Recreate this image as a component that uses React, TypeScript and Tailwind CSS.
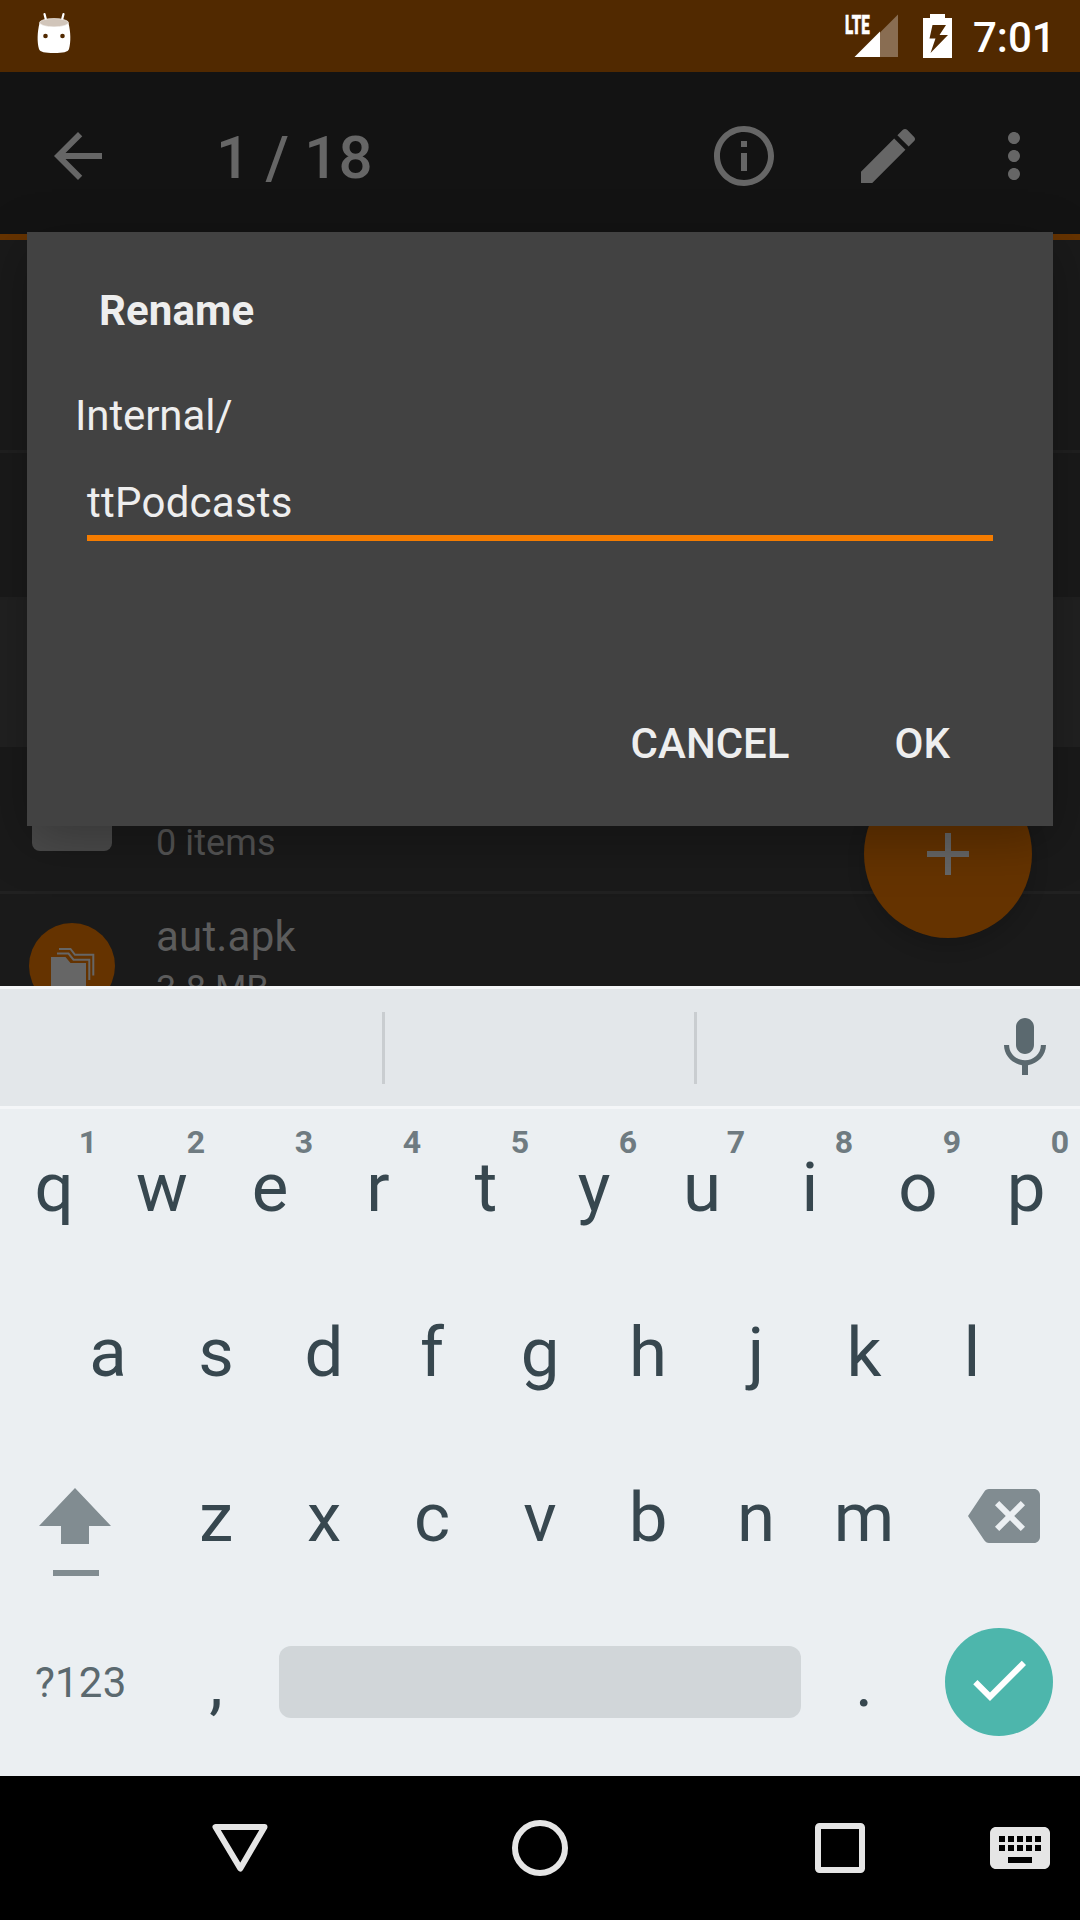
import React from "react";

const font = "font-[Roboto,'Liberation_Sans',sans-serif]";

function Icon({ d, className = "" }: { d: string; className?: string }) {
  return (
    <svg viewBox="0 0 24 24" className={`h-[72px] w-[72px] shrink-0 fill-current ${className}`}>
      <path d={d} />
    </svg>
  );
}

const ICONS = {
  back: "M20 11H7.83l5.59-5.59L12 4l-8 8 8 8 1.41-1.41L7.83 13H20v-2z",
  info: "M11 17h2v-6h-2v6zm1-15C6.48 2 2 6.48 2 12s4.48 10 10 10 10-4.48 10-10S17.52 2 12 2zm0 18c-4.41 0-8-3.59-8-8s3.59-8 8-8 8 3.59 8 8-3.59 8-8 8zM11 9h2V7h-2v2z",
  edit: "M3 17.25V21h3.75L17.81 9.94l-3.75-3.75L3 17.25zM20.71 7.04c.39-.39.39-1.02 0-1.41l-2.34-2.34c-.39-.39-1.02-.39-1.41 0l-1.83 1.83 3.75 3.75 1.83-1.83z",
  more: "M12 8c1.1 0 2-.9 2-2s-.9-2-2-2-2 .9-2 2 .9 2 2 2zm0 2c-1.1 0-2 .9-2 2s.9 2 2 2 2-.9 2-2-.9-2-2-2zm0 6c-1.1 0-2 .9-2 2s.9 2 2 2 2-.9 2-2-.9-2-2-2z",
  add: "M19 13h-6v6h-2v-6H5v-2h6V5h2v6h6v2z",
  mic: "M12 14c1.66 0 2.99-1.34 2.99-3L15 5c0-1.66-1.34-3-3-3S9 3.34 9 5v6c0 1.66 1.34 3 3 3zm5.3-3c0 3-2.54 5.1-5.3 5.1S6.7 14 6.7 11H5c0 3.41 2.72 6.23 6 6.72V21h2v-3.28c3.28-.48 6-3.3 6-6.72h-1.7z",
  backspace:
    "M22 3H7c-.69 0-1.23.35-1.59.88L0 12l5.41 8.11c.36.53.9.89 1.59.89h15c1.1 0 2-.9 2-2V5c0-1.1-.9-2-2-2zm-3 12.59L17.59 17 14 13.41 10.41 17 9 15.59 12.59 12 9 8.41 10.41 7 14 10.59 17.59 7 19 8.41 15.41 12 19 15.59z",
  check: "M9 16.17L4.83 12l-1.42 1.41L9 19 21 7l-1.41-1.41z",
  keyboard:
    "M20 5H4c-1.1 0-1.99.9-1.99 2L2 17c0 1.1.9 2 2 2h16c1.1 0 2-.9 2-2V7c0-1.1-.9-2-2-2zm-9 3h2v2h-2V8zm0 3h2v2h-2v-2zM8 8h2v2H8V8zm0 3h2v2H8v-2zm-1 2H5v-2h2v2zm0-3H5V8h2v2zm9 7H8v-2h8v2zm0-4h-2v-2h2v2zm0-3h-2V8h2v2zm3 3h-2v-2h2v2zm0-3h-2V8h2v2z",
};

function StatusBar() {
  return (
    <header className="flex h-[72px] shrink-0 items-start bg-[#512900] pl-[37px] pr-[31px] text-white">
      <svg viewBox="0 0 34 42" className="mt-3 h-[42px] w-[34px]">
        <path d="M7.500 2l2 8M26.500 2l-2 8" stroke="#fff" strokeWidth="2.200" strokeLinecap="round" />
        <path d="M2.500 11C.3 20 0 30 2 37c.8 3 6 4 15 4s14.200-1 15-4c2-7 1.700-17-.5-26z" fill="#fff" />
        <ellipse cx="17" cy="10.700" rx="14.500" ry="4.200" fill="#d1c5ba" stroke="#fff" strokeWidth=".6" />
        <circle cx="8.500" cy="24" r="2.300" fill="#512900" />
        <circle cx="25.500" cy="24" r="2.300" fill="#512900" />
      </svg>
      <div className="relative ml-auto mt-[14px] h-[44px] w-[54px]">
        <span className="absolute left-[1px] top-[1px] origin-left scale-x-[0.58] text-[26px] font-black leading-[20px] [-webkit-text-stroke:0.5px_white]">
          LTE
        </span>
        <svg viewBox="0 0 54 44" className="h-full w-full">
          <path d="M36 18.500L54 .5V43H36z" fill="#fff" fillOpacity=".32" />
          <path d="M10.500 43L36 17.500V43z" fill="#fff" />
        </svg>
      </div>
      <svg viewBox="0 0 29 44" className="ml-[25px] mt-[14px] h-[44px] w-[29px]">
        <path d="M7 0h15v4h7v40H0V4h7z" fill="#fff" />
        <path d="M9.500 11H23l-6.500 10H25L7.500 39l5-14.500H6.500z" fill="#512900" />
      </svg>
      <span className="ml-[21px] w-[76px] whitespace-nowrap text-[42px] font-medium leading-[75px]">7:01</span>
    </header>
  );
}

function Toolbar() {
  return (
    <div className="flex h-[168px] shrink-0 border-b-[6px] border-[#663300] bg-[#131313] pl-[42px] pr-[30px] pt-[48px] text-[#666]">
      <Icon d={ICONS.back} />
      <span className="ml-[102px] text-[60px] font-medium leading-[75px] tracking-[0.2px]">1 / 18</span>
      <Icon d={ICONS.info} className="ml-auto" />
      <Icon d={ICONS.edit} className="ml-[72px]" />
      <Icon d={ICONS.more} className="ml-[54px]" />
    </div>
  );
}

function FileList() {
  return (
    <div className="h-[746px] shrink-0 overflow-hidden bg-[#1a1a1a]">
      <div className="h-[213px] border-b-[3px] border-[#202020]" />
      <div className="h-[147px] border-b-[3px] border-[#202020]" />
      <div className="h-[147px] bg-[#212121]" />
      <div className="flex h-[147px] border-b-[3px] border-[#212121] pl-[32px]">
        <div className="mt-[36px] h-[68px] w-[80px] rounded-[8px] bg-[#4b4b4b]" />
        <span className="ml-[44px] mt-[73px] text-[36px] leading-[47px] tracking-[0.1px] text-[#555]">0 items</span>
      </div>
      <div className="flex h-[147px] pl-[29px]">
        <div className="mt-[29px] h-[86px] w-[86px] rounded-full bg-[#653300]">
          <svg viewBox="0 0 86 86" className="h-[86px] w-[86px]">
            <path d="M22 34h14.500l5 6H57v28H22z" fill="#666" />
            <path
              d="M28 30.500h11.500l5 6.200h15.800V57M30 26h11.500l4.500 5.800h18.300v20.700"
              fill="none"
              stroke="#666"
              strokeWidth="2"
            />
          </svg>
        </div>
        <div className="ml-[41px] flex flex-col pt-[18px] text-[#5c5c5c]">
          <span className="text-[42px] leading-[50px] tracking-[0.2px]">aut.apk</span>
          <span className="mt-[4px] text-[36px] leading-[47px]">3.8 MB</span>
        </div>
      </div>
    </div>
  );
}

function RenameDialog() {
  return (
    <div className="absolute left-[27px] top-[232px] flex h-[594px] w-[1026px] flex-col bg-[#424242] text-[42px] leading-[50px] text-[#eee] shadow-[0_14px_50px_rgba(0,0,0,0.28)]">
      <h1 className="ml-[72px] mt-[54px] font-bold tracking-[0.1px]">Rename</h1>
      <p className="ml-[48px] mt-[55px] tracking-[-0.1px]">Internal/</p>
      <div className="ml-[60px] mt-[37px] w-[906px] border-b-[6px] border-[#f57c00] pb-[7px] tracking-[0.25px]">
        ttPodcasts
      </div>
      <div className="mt-[178px] flex justify-end gap-[105px] pr-[103px] font-medium">
        <span>CANCEL</span>
        <span>OK</span>
      </div>
    </div>
  );
}

function Key({ label, hint }: { label: string; hint?: string }) {
  return (
    <div className="relative h-[165px] w-[108px] text-center text-[69px] leading-[157px] text-[#37474f]">
      {label}
      {hint && (
        <span className="absolute right-[11px] top-[14px] text-[32px] font-bold leading-[38px] text-[#6f7b81]">{hint}</span>
      )}
    </div>
  );
}

function Keyboard() {
  return (
    <section className="flex h-[790px] shrink-0 flex-col bg-[#ebeff2]">
      <div className="flex h-[123px] items-center border-b-[3px] border-t-[3px] border-[#f4f6f8] bg-[#e3e7ea]">
        <div className="h-[72px] w-[385px] border-r-[3px] border-[#c9cdd0]" />
        <div className="h-[72px] w-[312px] border-r-[3px] border-[#c9cdd0]" />
        <Icon d={ICONS.mic} className="ml-auto mr-[19px] mt-px text-[#5b696f]" />
      </div>
      <div className="flex">
        {"qwertyuiop".split("").map((c, i) => (
          <Key key={c} label={c} hint={String((i + 1) % 10)} />
        ))}
      </div>
      <div className="flex justify-center">
        {"asdfghjkl".split("").map((c) => (
          <Key key={c} label={c} />
        ))}
      </div>
      <div className="flex text-[#818c91]">
        <div className="w-[162px] pl-[39px] pt-[49px]">
          <svg viewBox="0 0 72 88" className="h-[88px] w-[72px] fill-current">
            <path d="M36 0l36 38H50v18H22V38H0z" />
            <path d="M14 82h46v6H14z" />
          </svg>
        </div>
        {"zxcvbnm".split("").map((c) => (
          <Key key={c} label={c} />
        ))}
        <Icon d={ICONS.backspace} className="ml-[50px] mt-[41px]" />
      </div>
      <div className="flex">
        <span className="w-[162px] pl-[35px] text-[42px] leading-[157px] tracking-[0.2px] text-[#5b696f]">?123</span>
        <Key label="," />
        <div className="ml-[9px] mr-[9px] mt-[42px] h-[72px] w-[522px] rounded-[12px] bg-[#d1d6d9]" />
        <Key label="." />
        <div className="ml-[27px] mt-[24px] h-[108px] w-[108px] rounded-full bg-[#4db6ac] pl-[18px] pt-[16px] text-white">
          <Icon d={ICONS.check} />
        </div>
      </div>
    </section>
  );
}

function NavBar() {
  return (
    <nav className="flex h-[144px] shrink-0 items-center bg-black pl-[204px] text-[#e5e5e5]">
      <svg viewBox="0 0 72 72" className="h-[72px] w-[72px] fill-none stroke-current">
        <path d="M11.500 15h49L36.300 56.500z" strokeWidth="6" strokeLinejoin="round" />
      </svg>
      <svg viewBox="0 0 72 72" className="ml-[228px] h-[72px] w-[72px] fill-none stroke-current">
        <circle cx="36" cy="36" r="25" strokeWidth="6" />
      </svg>
      <svg viewBox="0 0 72 72" className="ml-[228px] h-[72px] w-[72px] fill-none stroke-current">
        <rect x="14" y="14" width="44" height="44" rx="1.500" strokeWidth="6" />
      </svg>
      <Icon d={ICONS.keyboard} className="ml-[108px]" />
    </nav>
  );
}

export default function App() {
  return (
    <main className={`relative flex h-[1920px] w-[1080px] flex-col overflow-hidden bg-[#1a1a1a] ${font}`}>
      <StatusBar />
      <Toolbar />
      <FileList />
      <div className="absolute left-[864px] top-[770px] flex h-[168px] w-[168px] items-center justify-center rounded-full bg-[#653300] text-[#666] shadow-[0_9px_18px_rgba(0,0,0,0.15)]">
        <Icon d={ICONS.add} />
      </div>
      <RenameDialog />
      <Keyboard />
      <NavBar />
    </main>
  );
}
